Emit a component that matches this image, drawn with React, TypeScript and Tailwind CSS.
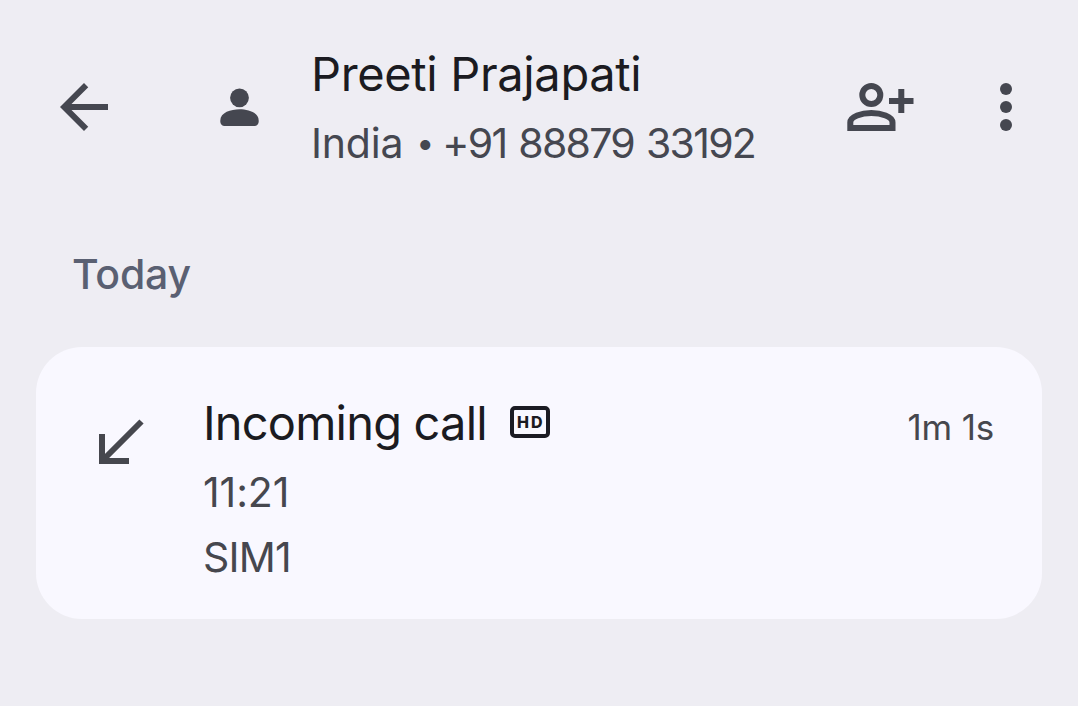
import React from 'react';

interface Call {
  id: number;
  label: string;
  time: string;
  sim: string;
  duration: string;
  isHd: boolean;
}

const calls: Call[] = [
  { id: 1, label: 'Incoming call', time: '11:21', sim: 'SIM1', duration: '1m 1s', isHd: true },
];

const BackIcon: React.FC = () => (
  <svg viewBox="0 0 24 24" className="size-[72px]" fill="currentColor">
    <path d="M20 11H7.83l5.59-5.59L12 4l-8 8 8 8 1.41-1.41L7.83 13H20z" />
  </svg>
);

const PersonIcon: React.FC = () => (
  <svg viewBox="0 0 40 40" className="size-10" fill="currentColor">
    <circle cx="20.5" cy="10.8" r="9.4" />
    <path d="M1.3 33.5C1.3 25.5 12 22.3 20.5 22.3s19.2 3.200 19.200 11.200v1.200a4.200 4.200 0 0 1-4.200 4.200H5.500a4.200 4.200 0 0 1-4.200-4.200z" />
  </svg>
);

const AddPersonIcon: React.FC = () => (
  <svg viewBox="0 0 68 48" className="w-[68px] h-12" fill="none" stroke="currentColor" strokeWidth="6">
    <circle cx="24.3" cy="12" r="9" />
    <path d="M3.3 45v-5.500C3.3 33.500 14.500 30 24.300 30s21.200 3.500 21.200 9.500V45z" />
    <path d="M42 18h24.500M54.300 6v24" />
  </svg>
);

const MoreIcon: React.FC = () => (
  <svg viewBox="0 0 12 48" className="w-3 h-12" fill="currentColor">
    <circle cx="6" cy="6" r="6" />
    <circle cx="6" cy="24" r="6" />
    <circle cx="6" cy="42" r="6" />
  </svg>
);

const IncomingIcon: React.FC = () => (
  <svg viewBox="0 0 45 45" className="size-[45px]" fill="none" stroke="currentColor" strokeWidth="6">
    <path d="M3 15v27h27M3.500 41.500L42.500 2.500" />
  </svg>
);

const HdBadge: React.FC = () => (
  <span className="flex h-8 w-10 items-center justify-center rounded-[5px] border-4 border-[#1b1b23] text-[16px] leading-none font-extrabold tracking-[2px] pl-[2px]">
    HD
  </span>
);

const CallCard: React.FC<{ call: Call }> = ({ call }) => (
  <div className="flex items-start rounded-[46px] bg-[#f9f8ff] h-[272px] pt-[46px] pl-[63px] pr-12 text-[#46474e]">
    <div className="pt-[26px] w-[104px] shrink-0">
      <IncomingIcon />
    </div>
    <div className="flex-1">
      <div className="flex items-center h-[60px] text-[#1b1b21]">
        <span className="text-[47px] tracking-[-0.8px]">{call.label}</span>
        {call.isHd && (
          <span className="ml-[23px] mb-0.5">
            <HdBadge />
          </span>
        )}
      </div>
      <div className="text-[41px] leading-[65px] mt-[7px] tracking-[-0.1px]">{call.time}</div>
      <div className="text-[41px] leading-[65px] tracking-[-0.8px]">{call.sim}</div>
    </div>
    <div className="text-[35px] leading-[69px] tracking-[-0.2px]">{call.duration}</div>
  </div>
);

const App: React.FC = () => {
  return (
    <div className="h-[706px] w-[1078px] overflow-hidden bg-[#eeedf3] font-['Inter',sans-serif] text-[#454750] whitespace-nowrap">
      <header className="flex items-center h-[214px] pl-12 pr-[66px]">
        <button aria-label="Back">
          <BackIcon />
        </button>
        <div className="ml-[99px]">
          <PersonIcon />
        </div>
        <div className="ml-[52px] pt-0.5 flex-1">
          <h1 className="text-[47px] leading-[70px] tracking-[-0.35px] text-[#1b1b21]">Preeti Prajapati</h1>
          <p className="flex items-center text-[41px] leading-[68px]">
            <span className="tracking-[-0.2px]">India</span>
            <span className="ml-[13px] w-[15px] text-[32px] text-center">•</span>
            <span className="ml-[11px] tracking-[-1.7px] [word-spacing:2px]">+91 88879 33192</span>
          </p>
        </div>
        <button aria-label="Add contact">
          <AddPersonIcon />
        </button>
        <button aria-label="More options" className="ml-[85px]">
          <MoreIcon />
        </button>
      </header>
      <main className="px-9">
        <h2 className="pl-9 h-[133px] pt-[29px] text-[41px] leading-[62px] font-medium tracking-[-0.2px] text-[#5a6072]">
          Today
        </h2>
        {calls.map((call) => (
          <CallCard key={call.id} call={call} />
        ))}
      </main>
    </div>
  );
};

export default App;
